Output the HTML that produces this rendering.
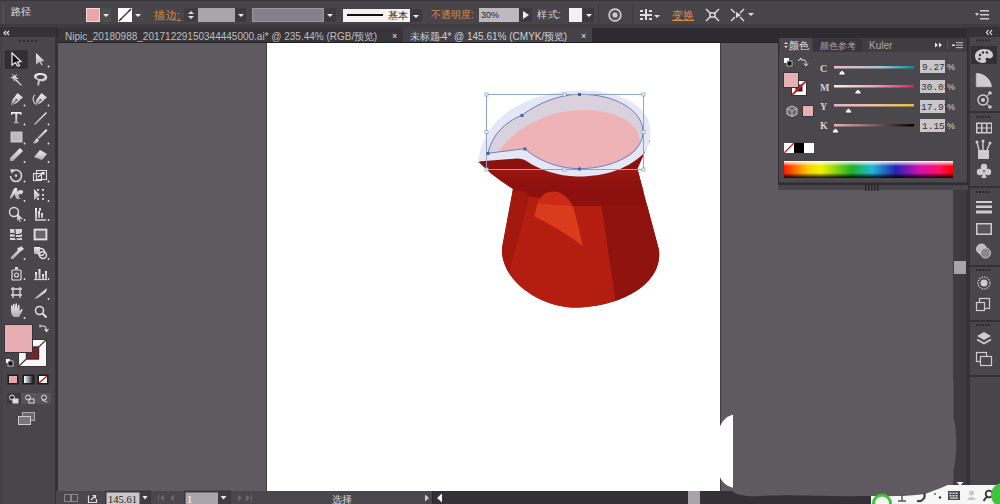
<!DOCTYPE html>
<html><head><meta charset="utf-8">
<style>
*{margin:0;padding:0;box-sizing:border-box}
html,body{width:1000px;height:504px;overflow:hidden;background:#5e5a5f;font-family:"Liberation Sans",sans-serif;}
.a{position:absolute}
#top{left:0;top:0;width:1000px;height:28px;background:#48454a;border-top:1px solid #3a373c;border-bottom:4px solid #3f3c41}
#top .sep{position:absolute;top:3px;width:1px;height:20px;background:#3a373d}
#tabs{left:56px;top:27px;width:912px;height:16px;background:#2e2b30}
#tb{left:0;top:27px;width:56px;height:477px;background:#49464b}
#tbh{left:0;top:27px;width:56px;height:10px;background:#353237}
#art{left:267px;top:43px;width:453px;height:448px;background:#fff;box-shadow:-1px 0 0 #3f3c41,1px 0 0 #3f3c41}
#status{left:56px;top:491px;width:897px;height:13px;background:linear-gradient(to right,#4a474c 0,#4a474c 376px,#343136 376px)}
#dock{left:968px;top:27px;width:32px;height:477px;background:#49464b;border-left:2px solid #363338}
#vscroll{left:953px;top:43px;width:15px;height:448px;background:#3e3b40}
#panel{left:778px;top:37px;width:190px;height:148px;background:#4b484d;border:1px solid #2f2c31}
.txt{position:absolute;white-space:nowrap;font-size:11px;color:#d8d5d8;line-height:1}
.org{color:#d98c48}
.cj{display:inline-block;white-space:nowrap}
.dd{position:absolute;background:#3d3a3f}
.dd:after{content:"";position:absolute;left:50%;top:50%;margin-left:-3px;margin-top:-1px;border-left:3px solid transparent;border-right:3px solid transparent;border-top:3px solid #eee}
</style></head><body>
<div id="art" class="a"></div>
<svg class="a" style="left:460px;top:80px" width="220" height="240" viewBox="460 80 220 240">
 <defs><clipPath id="bodyclip"><path id="bodyp" d="M478.5 162 Q493 176.5 513 189 L502 248 C500 280 540 307.5 576 307.5 C615 307.5 663 287 659 250 L637.5 169 L651 138 L520 138 Z"/></clipPath>
 <linearGradient id="neckg" x1="0" y1="0" x2="0" y2="1"><stop offset="0" stop-color="#9a1612"/><stop offset="1" stop-color="#8a0f0d"/></linearGradient></defs>
 <g clip-path="url(#bodyclip)">
  <rect x="470" y="140" width="200" height="180" fill="#8c100e"/>
  <rect x="470" y="170" width="200" height="22" fill="url(#neckg)"/>
  <path d="M470 189 L524 191 L529.5 196.5 L509 272 L530 310 L470 310 Z" fill="#a3180f"/>
  <path d="M529.5 196 L572 206 L601.7 206 L617 310 L530 310 L509 272 Z" fill="#b31e11"/>
  <path d="M601.7 206 L670 206 L670 310 L617 310 Z" fill="#901310"/>
 </g>
 <!-- highlight dome -->
 <path d="M537 204.5 C539 196 546 191.5 553.5 191.5 C562 191.5 569 198 573 206.5 Z" fill="#cb2a16"/>
 <!-- highlight sail -->
 <path d="M537.5 203.5 L572.8 206 C577 220 580.5 234 582.7 246 C570 236 550 224 534.3 216.5 Z" fill="#d93b1c"/>
 <!-- rim outer -->
 <path d="M478 161.5 C480 145 488 130 498 120 C512 106 540 91 580 90.5 C615 90 643 103 649 122 C652 134 650 145 644 153 C630 168 605 177 577 176.5 C558 176 540 170 528 162 C524 159.5 521 158.6 517 158.6 Z" fill="#e6e7f4"/>
 <!-- inner rim -->
 <path d="M487.9 153.3 C492 135 505 122 521.9 115.2 C540 102 560 94.5 579.5 94.3 C615 94 642 110 643 131 C644 152 615 168.5 579.5 168.6 C555 168.7 535 158 524.8 148.6 C515 150 498 152 487.9 153.3 Z" fill="#d9d2dc"/>
 <!-- liquid -->
 <path d="M498 152 C514 129 548 110 582 110 C615 110 638 122 640 140 C641 156 612 168 578 168 C555 168 535 158 525 149 C517 150 505 151.5 498 152 Z" fill="#eeb3b7"/>
 <!-- selected path -->
 <path d="M487.9 153.3 C492 135 505 122 521.9 115.2 C540 102 560 94.5 579.5 94.3 C615 94 642 110 643 131 C644 152 615 168.5 579.5 168.6 C555 168.7 535 158 524.8 148.6 C515 150 498 152 487.9 153.3 Z" fill="none" stroke="#6a7fc0" stroke-width="1"/>
 <!-- bbox -->
 <rect x="486.5" y="94.5" width="157" height="75" fill="none" stroke="#8ea4c6" stroke-width="1"/>
 <g fill="#fff" stroke="#8ea4c6" stroke-width="0.8">
  <rect x="485" y="93" width="3" height="3"/><rect x="563" y="93" width="3" height="3"/><rect x="642" y="93" width="3" height="3"/>
  <rect x="485" y="130.5" width="3" height="3"/><rect x="642" y="130.5" width="3" height="3"/>
  <rect x="485" y="168" width="3" height="3"/><rect x="563" y="168" width="3" height="3"/><rect x="642" y="168" width="3" height="3"/>
 </g>
 <g fill="#4b5fa6">
  <rect x="578" y="93" width="3" height="3"/><rect x="520.5" y="114" width="3" height="3"/><rect x="486.5" y="152" width="3" height="3"/><rect x="523.5" y="147.5" width="3" height="3"/><rect x="578" y="167.5" width="3" height="3"/>
 </g>
</svg>

<!-- TOP BAR -->
<div id="top" class="a">
  <div class="a" style="left:3px;top:3px;width:1px;height:20px;background:#5a575c"></div>
  <div class="txt" style="left:11px;top:6px;font-size:10px;color:#e4e2e4">路径</div>
  <div class="a" style="left:86px;top:7px;width:14px;height:14px;background:#e9a7a9;border:1px solid #f3d9dc"></div>
  <div class="dd" style="left:101px;top:7px;width:10px;height:14px;background:#4b504f"></div>
  <div class="a" style="left:118px;top:7px;width:14px;height:14px;background:#fff;overflow:hidden">
    <svg width="14" height="14" style="position:absolute;left:0;top:0"><line x1="1" y1="13" x2="13" y2="1" stroke="#2a1a18" stroke-width="1.5"/><line x1="4" y1="10" x2="10" y2="4" stroke="#a05030" stroke-width="0.8"/></svg>
  </div>
  <div class="dd" style="left:133px;top:7px;width:10px;height:14px;background:#4a474c"></div>
  <div class="txt org" style="left:154px;top:9px;font-size:10.5px;text-decoration:underline;letter-spacing:1px"><span class="cj" style="width:23px">描边</span>:</div>
  <div class="a" style="left:184px;top:7px;width:14px;height:14px;background:#3f3c41">
    <svg width="14" height="14" style="position:absolute;left:0;top:0"><path d="M4 6 L7 3 L10 6Z M4 8 L7 11 L10 8Z" fill="#ddd"/></svg>
  </div>
  <div class="a" style="left:198px;top:7px;width:37px;height:14px;background:#a9a5aa"></div>
  <div class="dd" style="left:235px;top:7px;width:11px;height:14px"></div>
  <div class="a" style="left:252px;top:7px;width:72px;height:14px;background:#85818a;border:1px solid #9a969b"></div>
  <div class="dd" style="left:324px;top:7px;width:12px;height:14px"></div>
  <div class="a" style="left:343px;top:8px;width:67px;height:13px;background:#f4f3f4">
    <div class="a" style="left:4px;top:5px;width:36px;height:2px;background:#111"></div>
    <div class="txt" style="left:45px;top:2px;font-size:9.5px;color:#222">基本</div>
  </div>
  <div class="dd" style="left:410px;top:8px;width:12px;height:13px"></div>
  <div class="txt org" style="left:431px;top:9px;font-size:10px"><span class="cj" style="width:40px">不透明度</span>:</div>
  <div class="a" style="left:479px;top:7px;width:40px;height:14px;background:#bdb9be">
    <div class="txt" style="left:2px;top:3px;font-size:9px;color:#222">30%</div>
  </div>
  <div class="a" style="left:519px;top:7px;width:13px;height:14px;background:#3d3a3f">
    <svg width="13" height="14" style="position:absolute;left:0;top:0"><path d="M4 3 L10 7 L4 11Z" fill="#eee"/></svg>
  </div>
  <div class="txt" style="left:537px;top:9px;font-size:10px;letter-spacing:1px"><span class="cj" style="width:21px">样式</span>:</div>
  <div class="a" style="left:569px;top:7px;width:13px;height:14px;background:#f2f0f2"></div>
  <div class="dd" style="left:583px;top:7px;width:11px;height:14px"></div>
  <div class="sep" style="left:598px"></div>
  <svg class="a" style="left:607px;top:6px" width="16" height="16"><circle cx="8" cy="8" r="6" fill="#5a575c" stroke="#ddd" stroke-width="1.4"/><circle cx="8" cy="8" r="2.5" fill="#ccc"/></svg>
  <div class="sep" style="left:632px"></div>
  <svg class="a" style="left:638px;top:7px" width="24" height="14"><g fill="#ddd"><rect x="2" y="2" width="3" height="2"/><rect x="7" y="1" width="2" height="11"/><rect x="11" y="2" width="3" height="2"/><rect x="2" y="6" width="12" height="2"/><rect x="2" y="10" width="3" height="2"/><rect x="11" y="10" width="3" height="2"/><path d="M16 7 L22 7 L19 10Z"/></g></svg>
  <div class="txt org" style="left:672px;top:9px;font-size:10.5px;text-decoration:underline">变换</div>
  <svg class="a" style="left:704px;top:6px" width="17" height="16"><g stroke="#ddd" stroke-width="1.5" fill="none"><path d="M2 2 L6 6 M15 2 L11 6 M2 14 L6 10 M15 14 L11 10"/><rect x="6" y="6" width="5" height="4"/></g></svg>
  <svg class="a" style="left:729px;top:6px" width="28" height="16"><g stroke="#ddd" stroke-width="1.4" fill="none"><path d="M2 2 L6 6 M15 2 L11 6 M2 14 L6 10 M15 14 L11 10"/></g><path d="M7 5 L12 8 L7 11Z" fill="#ddd"/><path d="M19 6 L25 6 L22 9Z" fill="#ddd"/></svg>
  <svg class="a" style="left:975px;top:8px" width="16" height="12"><g fill="#ccc"><rect x="5" y="1" width="9" height="1.5"/><rect x="5" y="5" width="9" height="1.5"/><rect x="5" y="9" width="9" height="1.5"/><path d="M0 4 L4 4 L2 7Z"/></g></svg>
</div>

<!-- TABS -->
<div id="tabs" class="a">
  <div class="a" style="left:0;top:0;width:912px;height:1px;background:#3f3c41"></div>
  <div class="a" style="left:0;top:15px;width:912px;height:1px;background:#222024"></div>
  <div class="a" style="left:2px;top:1px;width:345px;height:14px;background:#38353a"></div>
  <div class="txt" style="left:9px;top:5px;font-size:10px;color:#bfbcbf">Nipic_20180988_20171229150344445000.ai* @ 235.44% (RGB/<span class="cj" style="font-size:9.5px;width:19.5px">预览</span>)</div>
  <div class="txt" style="left:336px;top:5px;font-size:9px;color:#e6e6e6">×</div>
  <div class="a" style="left:347px;top:1px;width:189px;height:14px;background:#454247"></div>
  <div class="txt" style="left:354px;top:5px;font-size:10px;color:#d2cfd2"><span class="cj" style="font-size:9.5px;width:28.5px">未标题</span>-4* @ 145.61% (CMYK/<span class="cj" style="font-size:9.5px;width:19.5px">预览</span>)</div>
  <div class="txt" style="left:525px;top:5px;font-size:9px;color:#e6e6e6">×</div>
</div>

<!-- TOOLBAR -->
<div id="tb" class="a"></div>
<div id="tbh" class="a"></div>
<svg class="a" style="left:0;top:0" width="58" height="504">
 <defs>
  <linearGradient id="gi" x1="0" y1="0" x2="0" y2="1"><stop offset="0" stop-color="#f2f0f2"/><stop offset="1" stop-color="#aeaaaf"/></linearGradient>
 </defs>
 <rect x="55" y="37" width="3" height="467" fill="#363338"/>
 <rect x="1" y="37" width="1" height="467" fill="#3e3b40"/>
 <path d="M6 31 L4 33 L6 35 M9 31 L7 33 L9 35" stroke="#e8e8e8" stroke-width="1.2" fill="none"/>
 <g fill="#2c2a2e"><rect x="19" y="40" width="2" height="2"/><rect x="23" y="40" width="2" height="2"/><rect x="27" y="40" width="2" height="2"/><rect x="31" y="40" width="2" height="2"/><rect x="35" y="40" width="2" height="2"/></g>
 <rect x="5.5" y="51" width="21.5" height="17" fill="#333035" stroke="#2a272c"/>
 <g fill="url(#gi)" stroke="none">
  <!-- select -->
  <path d="M12 53 L21 61.5 L17.5 62 L19.5 65.5 L17.5 66 L15.5 62.5 L12 65Z" fill="#111" stroke="#eee" stroke-width="1.2"/>
  <!-- direct select -->
  <path d="M36 53 L44.5 61 L41 61.5 L43 65 L41.5 65.5 L39.5 62 L36 64.5Z"/>
  <!-- magic wand -->
  <path d="M12 73 L14 76 L17 74 L16 77 L19 79 L15.5 79 L14 82 L13 78.5 L10 78 L13 76.5Z"/>
  <path d="M16 79 L22 85 L21 86 L15 80Z"/>
  <!-- lasso -->
  <path d="M40 73 C46 73 48 76 47 78.5 C46 81 42 82 40 81 L39 86 L37 85 L38 80 C34 79 33 76 35 74.5 C36 73.5 38 73 40 73Z M40 75 C37 75 36 77 37 78 C38.5 79.5 43 79.5 44.5 77.5 C45.5 76 43 75 40 75Z"/>
  <!-- pen -->
  <path d="M11 105.5 L12.5 99.5 L16 95 L17.5 93 L23 97.5 L21 99 L17 103 Z"/>
  <path d="M11.5 105 L16 100.5" stroke="#49464b" stroke-width="0.9"/><circle cx="16.3" cy="100" r="1" fill="#49464b"/>
  <!-- curvature pen -->
  <path d="M35 105.5 L36.5 99.5 L40 95 L41.5 93 L47 97.5 L45 99 L41 103 Z"/>
  <path d="M35.5 105 L40 100.5" stroke="#49464b" stroke-width="0.9"/><circle cx="40.3" cy="100" r="1" fill="#49464b"/>
  <path d="M35 104 C32 100 33 96 35 95" stroke="#ccc" fill="none" stroke-width="1.2"/>
  <!-- Type T -->
  <path d="M11 112 L21.5 112 L21.5 115 L20.5 115 L20 113.8 L17.2 113.8 L17.2 122 L18.8 122 L18.8 123.2 L13.7 123.2 L13.7 122 L15.3 122 L15.3 113.8 L12.5 113.8 L12 115 L11 115Z"/>
  <!-- line -->
  <path d="M34 124 L46 112 L47 113 L35 125Z"/>
  <!-- rect -->
  <rect x="11" y="132" width="11" height="10" fill="#bdbabd" stroke="#ddd" stroke-width="0.8"/>
  <!-- brush -->
  <path d="M46 129 L47.5 130.5 L39 139 L37.5 137.5Z"/>
  <path d="M37 138 L39 140 C38 143 35 144 33 143 C34 142 35 140 37 138Z"/>
  <!-- pencil -->
  <path d="M20 148 L23 151 L13 161 L10 161 L10 158Z"/>
  <!-- eraser -->
  <path d="M40 150 L47 154 L42 160 L34 157Z"/>
  <!-- rotate -->
  <path d="M12.5 171.5 C14 170.3 15 170 16 170 C19 170 21.5 172.5 21.5 175.8 C21.5 179 19 181.5 16 181.5 C13 181.5 10.5 179 10.5 176" stroke="#d8d5d8" stroke-width="1.6" fill="none"/>
  <path d="M10 169.5 L14.5 169.5 L12 174Z"/>
  <circle cx="16" cy="175.8" r="1.3"/>
  <!-- scale -->
  <rect x="33.5" y="173.5" width="8" height="7" fill="none" stroke="#ddd" stroke-width="1.1"/>
  <rect x="36.5" y="170.5" width="10" height="9" fill="none" stroke="#ddd" stroke-width="1.1"/>
  <path d="M38 177 L44 172.5 M41.5 172.5 L44 172.5 L44 175" stroke="#eee" stroke-width="1.1" fill="none"/>
  <!-- warp -->
  <path d="M10 197 C12 193 13 189 15 188 C17 187 18 190 17 192 C19 190 21 189 23 191 C24 193 21 195 19 194 C18 197 20 199 22 199 L17 199 C15 197 15 195 15 194 C13 196 12 198 10 199Z"/>
  <!-- free transform -->
  <path d="M34 189 L40 195 L34 200Z"/>
  <g><rect x="42" y="189" width="2" height="2"/><rect x="42" y="194" width="2" height="2"/><rect x="42" y="198" width="2" height="2"/><rect x="37" y="189" width="2" height="2"/><rect x="37" y="198" width="2" height="2"/></g>
  <!-- shape builder -->
  <circle cx="14" cy="212" r="4.5" fill="none" stroke="#ddd" stroke-width="1.4"/>
  <path d="M17 213 L23 219 L20 219 L21 222 L19.5 222 L18.5 219.5 L17 221Z"/>
  <!-- perspective/graph -->
  <path d="M35 208 L37 208 L37 219 L46 219 L46 221 L35 221Z"/>
  <rect x="38" y="211" width="2" height="7"/><rect x="41" y="213" width="2" height="5"/><rect x="39" y="208" width="2" height="3"/>
  <!-- mesh -->
  <rect x="10" y="229" width="12" height="11" fill="#d6d3d6"/>
  <path d="M10 234 C13 231 16 238 22 233 M14.5 229 C17 233 13 236 16.5 240 M10 237.5 C13 236 17 239 22 237" stroke="#3a373c" fill="none" stroke-width="1.1"/>
  <!-- gradient -->
  <rect x="34" y="229" width="13" height="11" fill="#eee" stroke="#ccc" stroke-width="0.8"/>
  <rect x="35.5" y="230.5" width="10" height="8" fill="#666"/>
  <!-- eyedropper -->
  <path d="M21 246 L24 249 L20 252 L13 259 L11 259 L11 257 L18 250 L17 249 L19 247 L20 248Z"/>
  <!-- blend -->
  <rect x="34" y="247" width="6" height="7"/>
  <circle cx="41" cy="252" r="3.5" fill="none" stroke="#ddd" stroke-width="1.4"/>
  <circle cx="43" cy="255" r="3.5" fill="none" stroke="#ddd" stroke-width="1.5"/>
  <!-- symbol sprayer -->
  <rect x="12" y="270" width="9" height="10" rx="1" fill="none" stroke="#ddd" stroke-width="1.2"/>
  <rect x="15" y="267" width="3" height="3"/>
  <circle cx="16.5" cy="275" r="2" fill="none" stroke="#ddd" stroke-width="1.1"/>
  <!-- column graph -->
  <rect x="35" y="272" width="2" height="7"/><rect x="38.5" y="269" width="2" height="10"/><rect x="42" y="274" width="2" height="5"/><rect x="45" y="271" width="2" height="8"/>
  <rect x="34" y="279" width="13" height="1.2"/>
  <!-- artboard -->
  <path d="M11 289 L22 289 M11 295 L22 295 M13 287 L13 298 M20 287 L20 298" stroke="#ddd" stroke-width="1.3" fill="none"/>
  <!-- slice -->
  <path d="M47 288 L36 297 L34 299 L38 298 L46 292Z"/>
  <!-- hand -->
  <path d="M11 310 L11 306 C11 305 12.5 305 12.5 306 L12.5 309 L13 304.5 C13 303.5 14.5 303.5 14.5 304.5 L14.5 309 L15.5 304 C15.5 303 17 303 17 304 L17 309 L18 305.5 C18 304.5 19.5 304.5 19.5 305.5 L19.5 311 L21 309.5 C22 308.5 23 309.5 22.5 310.5 L19 317 L14 317 C12 316 11 314 11 310Z"/>
  <!-- zoom -->
  <circle cx="39.5" cy="310.5" r="4" fill="none" stroke="#ddd" stroke-width="1.6"/>
  <path d="M42.5 313.5 L46.5 317.5" stroke="#ddd" stroke-width="2.2"/>
 </g>
 <!-- flyout dots -->
 <g fill="#e6e6e6">
  <circle cx="48.5" cy="66.5" r="0.9"/>
  <circle cx="24.5" cy="105.5" r="0.9"/><circle cx="48.5" cy="105.5" r="0.9"/>
  <circle cx="24.5" cy="124.5" r="0.9"/><circle cx="48.5" cy="124.5" r="0.9"/>
  <circle cx="24.5" cy="143.5" r="0.9"/><circle cx="48.5" cy="143.5" r="0.9"/>
  <circle cx="24.5" cy="162" r="0.9"/><circle cx="48.5" cy="162" r="0.9"/>
  <circle cx="24.5" cy="181.5" r="0.9"/><circle cx="48.5" cy="181.5" r="0.9"/>
  <circle cx="24.5" cy="201" r="0.9"/><circle cx="48.5" cy="201" r="0.9"/>
  <circle cx="24.5" cy="220" r="0.9"/><circle cx="48.5" cy="220" r="0.9"/>
  <circle cx="24.5" cy="259" r="0.9"/><circle cx="48.5" cy="259" r="0.9"/>
  <circle cx="24.5" cy="279" r="0.9"/><circle cx="48.5" cy="279" r="0.9"/>
  <circle cx="48.5" cy="299" r="0.9"/>
  <circle cx="24.5" cy="318" r="0.9"/>
 </g>
 <!-- fill / stroke -->
 <rect x="18.5" y="339.5" width="28" height="27" fill="#fbf7f7" stroke="#3a373c"/>
 <rect x="26.5" y="347" width="12" height="12" fill="#7e2426" stroke="#3a2a2e" stroke-width="1.4"/>
 <path d="M19 366 L46 340" stroke="#4a3a3e" stroke-width="1.3"/>
 <rect x="4.5" y="324.5" width="28" height="28" fill="#e8adb1" stroke="#363338"/>
 <path d="M40 326 L43 326 C46 326 46.5 328 46.5 331 M44.5 329 L46.5 331.5 L48.5 329 M40 324.5 L40 327.5" stroke="#ddd" stroke-width="1.1" fill="none"/>
 <rect x="6" y="359" width="4" height="4" fill="#fff"/><rect x="8" y="361" width="5" height="5" fill="#111" stroke="#ddd" stroke-width="0.8"/>
 <!-- modes -->
 <rect x="7.5" y="374.5" width="11" height="10" fill="#1e1c20"/>
 <rect x="9" y="376" width="8" height="7" fill="#e3a7a8"/>
 <rect x="22.5" y="374.5" width="12" height="10" fill="#1e1c20"/>
 <defs><linearGradient id="gg" x1="0" y1="0" x2="1" y2="0"><stop offset="0" stop-color="#fff"/><stop offset="1" stop-color="#222"/></linearGradient></defs>
 <rect x="24" y="376" width="9" height="7" fill="url(#gg)"/>
 <rect x="37.5" y="374.5" width="11" height="10" fill="#1e1c20"/>
 <rect x="39" y="376" width="8" height="7" fill="#fff"/>
 <path d="M39 383 L47 376" stroke="#c8202a" stroke-width="1.6"/>
 <!-- draw modes -->
 <rect x="7" y="393" width="14" height="11" fill="#3c393e"/>
 <rect x="21" y="393" width="30" height="11" fill="#56535a"/>
 <g stroke="#ddd" fill="none" stroke-width="1">
  <circle cx="12" cy="397.5" r="2.5"/><rect x="13" y="399" width="5" height="4" fill="#ddd"/>
  <circle cx="28" cy="397.5" r="2.5"/><rect x="29" y="399" width="5" height="4"/>
  <circle cx="44" cy="397.5" r="2.5"/><path d="M42 400 L47 402"/>
 </g>
 <!-- screen mode -->
 <rect x="22.5" y="412.5" width="12" height="8" fill="#6a676c" stroke="#aaa"/>
 <rect x="18.5" y="416.5" width="12" height="8" fill="#7a777c" stroke="#ccc"/>
</svg>

<!-- STATUS -->
<div id="status" class="a"></div>
<svg class="a" style="left:0;top:380px;z-index:10" width="1000" height="124" viewBox="0 380 1000 124">
 <!-- status bar items -->
 <g fill="none" stroke="#8a878c" stroke-width="1">
  <rect x="64.5" y="494.5" width="6" height="7"/><rect x="71.5" y="494.5" width="6" height="7"/>
 </g>
 <path d="M88.5 495.5 L88.5 502.5 L96.5 502.5 L96.5 499 M91 500 L95 496 M92.5 495.5 L95.5 495.5 L95.5 498.5" stroke="#ddd" stroke-width="1.2" fill="none"/>
 <rect x="105" y="490.5" width="46" height="13.5" fill="#3a373c"/><rect x="106.5" y="492.5" width="33" height="11.5" fill="#cac7cb"/>
 <text x="108" y="502.5" font-family="Liberation Serif" font-size="10.5" fill="#222">145.61</text>
 <rect x="140" y="492" width="10" height="12" fill="#3f3c41"/>
 <path d="M142.5 496 L147.5 496 L145 499.5Z" fill="#eee"/>
 <g fill="#6a676c">
  <rect x="158" y="494.5" width="1" height="7"/><path d="M164 494.5 L160 498 L164 501.5Z"/><path d="M174 494.5 L170 498 L174 501.5Z"/>
 </g>
 <rect x="184" y="490.5" width="47" height="13.5" fill="#3a373c"/><rect x="185.5" y="492.5" width="32.5" height="11.5" fill="#a9a6aa"/>
 <text x="187" y="502.5" font-family="Liberation Serif" font-size="10.5" fill="#fff">1</text>
 <rect x="218" y="492" width="12" height="12" fill="#3f3c41"/>
 <path d="M220.5 496 L226.5 496 L223.5 499.5Z" fill="#eee"/>
 <g fill="#6a676c">
  <path d="M238 494.5 L242 498 L238 501.5Z"/><path d="M246 494.5 L250 498 L246 501.5Z"/><rect x="251" y="494.5" width="1" height="7"/>
 </g>
 <text x="332" y="502.5" font-family="Liberation Sans" font-size="10" fill="#dcdadc">选择</text>
 <path d="M425 494.5 L429 498 L425 501.5Z" fill="#cfcccf"/>
 <rect x="432" y="491" width="1" height="13" fill="#2a272c"/>
 <path d="M442 493.5 L437 498 L442 502.5Z" fill="#f4f4f4"/>
 <rect x="688" y="491" width="12" height="13" fill="#a7a3a8"/>
 <!-- white notch beyond artboard -->
 <path d="M719.5 428 C721.5 421 727 416 733.5 414.5 L733.5 488 C727 486.5 721.5 482 719.5 476Z" fill="#fff"/>
 <!-- IME bar -->
 <rect x="871" y="485" width="129" height="19" fill="#f6f6f6"/>
 <!-- patch -->
 <path d="M733 380 L953.5 380 L953.5 418 C957 428 957 458 953.5 470 L953.5 481 C948 486 938 489 925 494 C905 497 880 496 860 496 C830 497 800 494 760 496 C748 497 738 495 733 492Z" fill="#5e5a5f"/>
 <path d="M956.5 482 L963.5 482 L960 486Z" fill="#f0f0f0"/>
 <circle cx="882" cy="503.5" r="8.5" fill="none" stroke="#3ec43a" stroke-width="3"/>
 <path d="M899 495 L905 495 M902 495 L902 501 M898 501 L906 501" stroke="#555" stroke-width="1.5"/>
 <path d="M924 493 C926 497 923 502 917 501" stroke="#444" stroke-width="2.2" fill="none"/>
 <circle cx="935" cy="494" r="1" fill="#666"/><circle cx="940" cy="497.5" r="1.2" fill="#333"/>
 <rect x="948" y="491" width="12" height="9" fill="#4a4a50"/>
 <g fill="#ddd"><rect x="949.5" y="492.5" width="2" height="1.5"/><rect x="952.5" y="492.5" width="2" height="1.5"/><rect x="955.5" y="492.5" width="2" height="1.5"/><rect x="949.5" y="495" width="2" height="1.5"/><rect x="952.5" y="495" width="2" height="1.5"/><rect x="955.5" y="495" width="2" height="1.5"/><rect x="950" y="497.5" width="8" height="1.2"/></g>
 <circle cx="971.5" cy="493" r="2.5" fill="#c8c8c8"/><path d="M967.5 500 C967.5 496 975.5 496 975.5 500Z" fill="#c8c8c8"/>
 <circle cx="989" cy="494" r="3.3" fill="none" stroke="#333" stroke-width="1.8"/><path d="M986.5 497 L983.5 501" stroke="#333" stroke-width="2"/>
 <circle cx="1003" cy="495" r="12" fill="#3ec43a"/>
</svg>

<!-- VSCROLL -->
<div id="vscroll" class="a">
  <div class="a" style="left:1px;top:218px;width:12px;height:13px;background:#a7a3a8"></div>
</div>

<!-- DOCK -->
<div id="dock" class="a"></div>
<svg class="a" style="left:966px;top:27px" width="34" height="477" viewBox="966 27 34 477">
 <rect x="966" y="27" width="34" height="10" fill="#353237"/>
 <path d="M986 30 L988 32.5 L986 35 M989.5 30 L991.5 32.5 L989.5 35" stroke="#e8e8e8" stroke-width="1.2" fill="none" transform="rotate(180 989 32.5)"/>
 <rect x="966" y="37" width="2.5" height="467" fill="#363338"/>
 <g fill="#2c2a2e">
  <rect x="976" y="39.5" width="2" height="2"/><rect x="979" y="39.5" width="2" height="2"/><rect x="982" y="39.5" width="2" height="2"/><rect x="985" y="39.5" width="2" height="2"/><rect x="988" y="39.5" width="2" height="2"/>
  <rect x="976" y="116" width="2" height="2"/><rect x="979" y="116" width="2" height="2"/><rect x="982" y="116" width="2" height="2"/><rect x="985" y="116" width="2" height="2"/><rect x="988" y="116" width="2" height="2"/>
  <rect x="976" y="191" width="2" height="2"/><rect x="979" y="191" width="2" height="2"/><rect x="982" y="191" width="2" height="2"/><rect x="985" y="191" width="2" height="2"/><rect x="988" y="191" width="2" height="2"/>
  <rect x="976" y="269" width="2" height="2"/><rect x="979" y="269" width="2" height="2"/><rect x="982" y="269" width="2" height="2"/><rect x="985" y="269" width="2" height="2"/><rect x="988" y="269" width="2" height="2"/>
  <rect x="976" y="324" width="2" height="2"/><rect x="979" y="324" width="2" height="2"/><rect x="982" y="324" width="2" height="2"/><rect x="985" y="324" width="2" height="2"/><rect x="988" y="324" width="2" height="2"/>
 </g>
 <g fill="#343136">
  <rect x="968" y="111" width="32" height="2"/><rect x="968" y="186" width="32" height="2"/><rect x="968" y="265" width="32" height="2"/><rect x="968" y="320" width="32" height="2"/><rect x="968" y="375" width="32" height="2"/>
 </g>
 <rect x="971" y="46" width="26" height="18" fill="#333035"/>
 <g fill="#cfcccf" stroke="none">
  <!-- palette -->
  <path d="M984 49 C990 49 993 52 993 55 C993 58 990 59 988 58 C986 57 985 59 986 60.5 C987 62 985 63 983 63 C978 63 975 60 975 56 C975 52 979 49 984 49Z"/>
  <g fill="#333035"><circle cx="980" cy="55" r="1.2"/><circle cx="983" cy="52.5" r="1.2"/><circle cx="987" cy="52.5" r="1.2"/><circle cx="979.5" cy="59" r="1.2"/></g>
  <!-- color guide -->
  <path d="M976 73 C984 73 991 79 992 87 L976 87Z"/>
  <path d="M976 73 L976 87 L992 87" fill="none" stroke="#888" stroke-width="0.6"/>
  <!-- symbols (target) -->
  <circle cx="983" cy="100" r="5" fill="none" stroke="#cfcccf" stroke-width="1.5"/>
  <circle cx="983" cy="100" r="2"/>
  <circle cx="990" cy="93" r="1.8"/><circle cx="990" cy="107" r="1.8"/>
  <path d="M987 96 L990 93 M987 104 L990 107" stroke="#cfcccf" stroke-width="1"/>
  <!-- swatches -->
  <rect x="976" y="122.5" width="16" height="11" fill="#cfcccf"/>
  <g fill="#49464b"><rect x="977.5" y="124" width="3.5" height="3.5"/><rect x="982.5" y="124" width="3.5" height="3.5"/><rect x="987.5" y="124" width="3.5" height="3.5"/><rect x="977.5" y="128.5" width="3.5" height="3.5"/><rect x="982.5" y="128.5" width="3.5" height="3.5"/><rect x="987.5" y="128.5" width="3.5" height="3.5"/></g>
  <!-- brushes -->
  <rect x="978" y="150" width="11" height="9"/>
  <path d="M979 150 L977 142 M983 150 L983 141 M987 150 L990 143" stroke="#cfcccf" stroke-width="1.4"/>
  <circle cx="977" cy="142" r="1.5"/><circle cx="983" cy="141" r="1.5"/><circle cx="990" cy="143" r="1.5"/>
  <!-- club -->
  <circle cx="984" cy="167" r="3.2"/><circle cx="980" cy="172" r="3.2"/><circle cx="988" cy="172" r="3.2"/>
  <path d="M984 170 L981.5 178 L986.5 178Z"/>
  <!-- stroke -->
  <rect x="976" y="201" width="16" height="2"/><rect x="976" y="205.5" width="16" height="2.5"/><rect x="976" y="210.5" width="16" height="3"/>
  <!-- gradient -->
  <rect x="976" y="223" width="16" height="12" fill="#cfcccf"/>
  <rect x="977.5" y="224.5" width="13" height="9" fill="#555"/>
  <!-- transparency -->
  <circle cx="981.5" cy="249" r="5" fill="#bdbabd" stroke="#cfcccf"/>
  <circle cx="985.5" cy="253" r="5" fill="#8a878c" stroke="#cfcccf"/>
  <!-- appearance -->
  <circle cx="984" cy="283" r="6" fill="none" stroke="#cfcccf" stroke-width="1.2" stroke-dasharray="1.5 1"/>
  <circle cx="984" cy="283" r="3.5"/>
  <!-- graphic styles -->
  <rect x="979.5" y="298.5" width="10" height="10" fill="none" stroke="#cfcccf" stroke-width="1.2"/>
  <rect x="976.5" y="302.5" width="8" height="8" fill="#49464b" stroke="#cfcccf" stroke-width="1.2"/>
  <!-- layers -->
  <path d="M984 332 L991 336 L984 340 L977 336Z"/>
  <path d="M977 339.5 L984 343.5 L991 339.5" fill="none" stroke="#cfcccf" stroke-width="1.6"/>
  <!-- artboards -->
  <rect x="976.5" y="352.5" width="10" height="9" fill="none" stroke="#cfcccf" stroke-width="1.2"/>
  <rect x="980.5" y="356.5" width="11" height="9" fill="#49464b" stroke="#cfcccf" stroke-width="1.2"/>
 </g>
</svg>

<!-- COLOR PANEL -->
<div id="panel" class="a"></div>
<svg class="a" style="left:770px;top:27px" width="200" height="170" viewBox="770 27 200 170">
 <defs>
  <linearGradient id="spec" x1="0" y1="0" x2="1" y2="0">
   <stop offset="0" stop-color="#ff1a00"/><stop offset="0.14" stop-color="#ffcc00"/><stop offset="0.22" stop-color="#f2f200"/><stop offset="0.4" stop-color="#1eb12a"/><stop offset="0.52" stop-color="#22b8d8"/><stop offset="0.66" stop-color="#2424b0"/><stop offset="0.8" stop-color="#d010b0"/><stop offset="0.92" stop-color="#ff1060"/><stop offset="1" stop-color="#ff0000"/>
  </linearGradient>
  <linearGradient id="specv" x1="0" y1="0" x2="0" y2="1">
   <stop offset="0" stop-color="#fff" stop-opacity="1"/><stop offset="0.3" stop-color="#fff" stop-opacity="0"/><stop offset="0.7" stop-color="#000" stop-opacity="0"/><stop offset="1" stop-color="#000" stop-opacity="0.95"/>
  </linearGradient>
  <linearGradient id="gc" x1="0" x2="1"><stop offset="0" stop-color="#f2bcc6"/><stop offset="0.6" stop-color="#9ec6d0"/><stop offset="1" stop-color="#0a8a9a"/></linearGradient>
  <linearGradient id="gm" x1="0" x2="1"><stop offset="0" stop-color="#f4f0dc"/><stop offset="0.5" stop-color="#eea4b8"/><stop offset="1" stop-color="#e0205a"/></linearGradient>
  <linearGradient id="gy" x1="0" x2="1"><stop offset="0" stop-color="#e8b0cc"/><stop offset="0.5" stop-color="#f0c0a0"/><stop offset="1" stop-color="#e8c030"/></linearGradient>
  <linearGradient id="gk" x1="0" x2="1"><stop offset="0" stop-color="#e8b4b0"/><stop offset="0.5" stop-color="#806060"/><stop offset="1" stop-color="#000"/></linearGradient>
 </defs>
 <!-- tab row -->
 <rect x="779" y="38" width="188" height="14" fill="#403d42"/>
 <rect x="780" y="38" width="32" height="14" fill="#4b484d"/>
 <rect x="813" y="38.5" width="49" height="13" fill="#37343a"/>
 <path d="M784 44 L786 42 L788 44Z M784 46 L786 48 L788 46Z" fill="#ddd"/>
 <text x="789" y="49" font-size="10" fill="#e6e4e6" font-family="Liberation Sans">颜色</text>
 <text x="820" y="49" font-size="9" fill="#a8a5a8" font-family="Liberation Sans">颜色参考</text>
 <text x="869" y="49" font-size="10" fill="#a8a5a8" font-family="Liberation Sans">Kuler</text>
 <path d="M935 42.5 L938 45 L935 47.5Z M939 42.5 L942 45 L939 47.5Z" fill="#e8e8e8"/>
 <rect x="947" y="41" width="1" height="8" fill="#5a575c"/>
 <rect x="952" y="44.5" width="3" height="1.5" fill="#ddd"/>
 <g fill="#aaa"><rect x="956" y="42" width="7" height="1.2"/><rect x="956" y="44.5" width="7" height="1.2"/><rect x="956" y="47" width="7" height="1.2"/></g>
 <!-- small fill stroke -->
 <rect x="784" y="58" width="5" height="5" fill="#fff"/><rect x="787" y="61" width="5" height="5" fill="#111" stroke="#ccc" stroke-width="0.8"/>
 <path d="M798 61 L801 58 L801 60 L804 60 C806 60 806 62 806 64 L806 65 M804 63.5 L806 66 L808 63.5" stroke="#ddd" stroke-width="1" fill="none"/>
 <!-- stroke swatch -->
 <rect x="791.5" y="80.5" width="15" height="15" fill="#fff" stroke="#333"/>
 <rect x="795" y="84" width="8" height="8" fill="#5a1818" stroke="#fff" stroke-width="1"/>
 <path d="M792 95 L806 81" stroke="#c8202a" stroke-width="1.8"/>
 <!-- fill swatch -->
 <rect x="783.5" y="72.5" width="15" height="15" fill="#e9b0b4" stroke="#3a373c"/>
 <!-- cube & small swatch -->
 <path d="M792 106 L797 108.5 L797 114 L792 116.5 L787 114 L787 108.5Z" fill="#6a676c" stroke="#cfcccf" stroke-width="1"/>
 <path d="M787 108.5 L792 111 L797 108.5 M792 111 L792 116.5" stroke="#cfcccf" stroke-width="0.8" fill="none"/>
 <rect x="802.5" y="105.5" width="11" height="11" fill="#e9b0b4" stroke="#3a373c"/>
 <!-- labels -->
 <g font-family="Liberation Serif" font-size="10" fill="#d4d2d4" font-weight="bold">
  <text x="820" y="72">C</text><text x="820" y="91">M</text><text x="820" y="110">Y</text><text x="820" y="129">K</text>
 </g>
 <!-- sliders -->
 <rect x="834" y="66" width="80" height="2.5" fill="url(#gc)"/>
 <rect x="834" y="85" width="80" height="2.5" fill="url(#gm)"/>
 <rect x="834" y="104" width="80" height="2.5" fill="url(#gy)"/>
 <rect x="834" y="124" width="80" height="2.5" fill="url(#gk)"/>
 <g fill="#eee" stroke="#222" stroke-width="0.6">
  <path d="M842 70 L845 73 L845 75 L839 75 L839 73Z"/>
  <path d="M858 89 L861 92 L861 94 L855 94 L855 92Z"/>
  <path d="M848.5 108 L851.5 111 L851.5 113 L845.5 113 L845.5 111Z"/>
  <path d="M835.5 128 L838.5 131 L838.5 133 L832.5 133 L832.5 131Z"/>
 </g>
 <!-- value boxes -->
 <g fill="#c9c6ca">
  <rect x="920" y="60" width="25" height="13"/><rect x="920" y="80" width="25" height="13"/><rect x="920" y="100" width="25" height="13"/><rect x="920" y="119" width="25" height="13"/>
 </g>
 <g font-family="Liberation Mono" font-size="9.5" fill="#333">
  <text x="922" y="70">9.27</text><text x="921" y="90">30.03</text><text x="921" y="110">17.97</text><text x="922" y="129">1.15</text>
 </g>
 <g font-family="Liberation Sans" font-size="9" fill="#d4d2d4">
  <text x="947" y="70">%</text><text x="947" y="90">%</text><text x="947" y="110">%</text><text x="947" y="129">%</text>
 </g>
 <!-- none/black/white -->
 <rect x="784" y="143" width="10" height="10" fill="#fff"/>
 <path d="M784 153 L794 143" stroke="#c8202a" stroke-width="1.2"/>
 <rect x="794" y="143" width="10" height="10" fill="#000"/>
 <rect x="804" y="143" width="10" height="10" fill="#fff"/>
 <!-- spectrum -->
 <rect x="784" y="161" width="169" height="17" fill="url(#spec)"/>
 <rect x="784" y="161" width="169" height="17" fill="url(#specv)"/>
 <!-- bottom -->
 <rect x="778" y="182.5" width="190" height="2.5" fill="#2f2c31"/>
 <rect x="778" y="185" width="190" height="5" fill="#49464b"/>
 <g fill="#2a282c"><rect x="865" y="184" width="1.5" height="7"/><rect x="868" y="184" width="1.5" height="7"/><rect x="871" y="184" width="1.5" height="7"/><rect x="874" y="184" width="1.5" height="7"/><rect x="877" y="184" width="1.5" height="7"/></g>
</svg>
</body></html>
